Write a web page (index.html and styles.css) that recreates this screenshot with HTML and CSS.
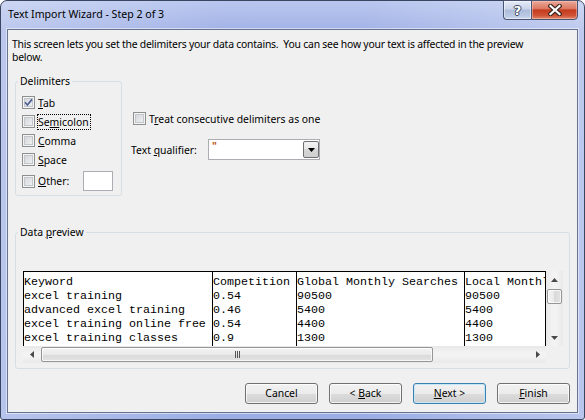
FILE: index.html
```html
<!DOCTYPE html>
<html>
<head>
<meta charset="utf-8">
<title>Text Import Wizard</title>
<link rel="stylesheet" href="styles.css">
</head>
<body>
<div class="window">
  <div class="titlebar">
    <span class="title">Text Import Wizard - Step 2 of 3</span>
    <div class="caption">
      <div class="cbtn help"><span class="qmark">?</span></div>
      <div class="cbtn close">
        <svg width="14" height="12" viewBox="0 0 14 12"><path d="M2.5 2 L11.5 10 M11.5 2 L2.5 10" stroke="#3b2620" stroke-width="4.4" stroke-linecap="square" fill="none"/><path d="M2.5 2 L11.5 10 M11.5 2 L2.5 10" stroke="#fff" stroke-width="2.2" stroke-linecap="square" fill="none"/></svg>
      </div>
    </div>
  </div>
  <div class="client">
    <p class="desc">This screen lets you set the delimiters your data contains.&nbsp; You can see how your text is affected in the preview<br>below.</p>
    <div class="top-row">
      <fieldset class="group delims">
        <legend>Delimiters</legend>
        <div class="checks">
          <div class="chk"><span class="box"><svg width="9" height="9" viewBox="0 0 9 9"><path d="M1 4.3 L3.4 7 L8 1.4" fill="none" stroke="#4d5f95" stroke-width="1.7"/></svg></span><span class="txt"><u>T</u>ab</span></div>
          <div class="chk"><span class="box"></span><span class="txt focus">Se<u>m</u>icolon</span></div>
          <div class="chk"><span class="box"></span><span class="txt"><u>C</u>omma</span></div>
          <div class="chk"><span class="box"></span><span class="txt"><u>S</u>pace</span></div>
          <div class="chk other"><span class="box"></span><span class="txt other-lbl"><u>O</u>ther:</span><span class="textbox"></span></div>
        </div>
      </fieldset>
      <div class="options">
        <div class="chk treat"><span class="box"></span><span class="txt">T<u>r</u>eat consecutive delimiters as one</span></div>
        <div class="qualifier">
          <span class="qlabel">Text <u>q</u>ualifier:</span>
          <div class="combo">
            <span class="combo-val">"</span>
            <span class="combo-btn"><svg width="7" height="4" viewBox="0 0 7 4"><path d="M0 0H7L3.5 4Z" fill="#000"/></svg></span>
          </div>
        </div>
      </div>
    </div>
    <fieldset class="group preview">
      <legend>Data <u>p</u>review</legend>
      <div class="pv">
        <div class="pv-table">
          <div class="col c1">Keyword
excel training
advanced excel training
excel training online free
excel training classes</div>
          <div class="col c2">Competition
0.54
0.46
0.54
0.9</div>
          <div class="col c3">Global Monthly Searches
90500
5400
4400
1300</div>
          <div class="col c4">Local Monthly Searches
90500
5400
4400
1300</div>
        </div>
        <div class="vscroll">
          <span class="sbtn up"><svg width="7" height="4" viewBox="0 0 7 4"><path d="M0 4H7L3.5 0Z" fill="#4a4a4a"/></svg></span>
          <span class="vthumb"></span>
          <span class="sbtn down"><svg width="7" height="4" viewBox="0 0 7 4"><path d="M0 0H7L3.5 4Z" fill="#4a4a4a"/></svg></span>
        </div>
        <div class="hscroll">
          <span class="sbtn left"><svg width="4" height="7" viewBox="0 0 4 7"><path d="M4 0V7L0 3.5Z" fill="#4a4a4a"/></svg></span>
          <span class="hthumb"><span class="grip"></span></span>
          <span class="sbtn right"><svg width="4" height="7" viewBox="0 0 4 7"><path d="M0 0V7L4 3.5Z" fill="#4a4a4a"/></svg></span>
        </div>
        <div class="corner"></div>
      </div>
    </fieldset>
    <div class="buttons">
      <button class="btn">Cancel</button>
      <button class="btn">&lt; <u>B</u>ack</button>
      <button class="btn default"><u>N</u>ext &gt;</button>
      <button class="btn"><u>F</u>inish</button>
    </div>
  </div>
</div>
</body>
</html>
```

FILE: styles.css
```css
* { box-sizing: border-box; margin: 0; padding: 0; }
html, body { width: 585px; height: 420px; background: #fff; overflow: hidden; }
body { font-family: "Noto Sans", "Open Sans", sans-serif; font-size: 10.4px; color: #000; }
u { text-decoration: underline; text-underline-offset: 1px; }

.window {
  width: 585px; height: 420px;
  border: 1px solid #3a4562;
  border-radius: 7px 7px 3px 3px;
  padding: 0 6px 6px 6px;
  display: flex; flex-direction: column;
  background:
    linear-gradient(to right, rgba(255,255,255,.28) 0, rgba(255,255,255,0) 38%, rgba(255,255,255,0) 62%, rgba(255,255,255,.3) 100%),
    linear-gradient(#b9c7ef, #a2b2e6 30px, #9badE4);
}
.titlebar { height: 28px; flex: none; display: flex; align-items: flex-start; }
.title { padding-left: 1px; line-height: 27px; font-size: 10.6px; color: #000; white-space: nowrap; }
.caption { margin-left: auto; margin-top: -1px; display: flex; }
.cbtn { height: 20px; border: 1px solid #4a5470; display: flex; align-items: center; justify-content: center; }
.help {
  width: 28px; border-right: none; border-radius: 0 0 0 4px;
  background: linear-gradient(#e6ebf6, #c9d3ea 45%, #aebcdb 50%, #bccae5 85%, #d3dcef);
  box-shadow: inset 0 0 0 1px rgba(255,255,255,.45);
}
.qmark { font-family: "DejaVu Sans", sans-serif; font-weight: bold; font-size: 13px; line-height: 13px; color: #fff;
  text-shadow: -1px 0 #3d465e, 1px 0 #3d465e, 0 -1px #3d465e, 0 1px #3d465e; }
.close {
  width: 47px; border-radius: 0 0 4px 0;
  background: linear-gradient(#eaa898, #dc7962 42%, #c43c1f 50%, #cf5235 80%, #e28a6d);
  box-shadow: inset 0 0 0 1px rgba(255,210,200,.45);
}

.client {
  flex: 1;
  border: 1px solid #66738f;
  box-shadow: 0 0 0 1px rgba(255,255,255,.5);
  background: #f0f0f0;
  display: flex; flex-direction: column;
}
.desc { flex: none; padding: 8px 0 0 4px; line-height: 13px; white-space: nowrap; letter-spacing: -0.22px; }

.top-row { flex: none; display: flex; margin-top: 11px; }
.group { border: 1px solid #d5dfe5; border-radius: 3px; padding: 0; }
.group legend { margin-left: 2px; padding: 0 2px; line-height: 13px; }
.delims { margin-left: 7px; width: 107px; height: 121px; }
.checks { padding: 5px 0 0 6px; }

.chk { display: flex; align-items: center; height: 19px; }
.box {
  width: 13px; height: 13px; flex: none; margin-right: 2px;
  border: 1px solid #8e8f8f;
  background: linear-gradient(135deg, #cdd0d5, #f6f6f6);
  box-shadow: inset 0 0 0 1px #f4f4f4, inset 0 0 0 2px #c3c6cb;
  display: flex; align-items: center; justify-content: center;
}
.txt { border: 1px solid transparent; padding-right: 1px; line-height: 14px; white-space: nowrap; }
.txt.focus { border: 1px dotted #000; }
.chk.other { height: 24px; }
.other-lbl { width: 46px; }
.textbox { width: 30px; height: 20px; border: 1px solid #abadb3; background: #fff; }

.options { margin-left: 9px; padding-top: 34px; }
.treat { padding-left: 2px; }
.qualifier { display: flex; align-items: center; margin-top: 11px; height: 21px; }
.qlabel { width: 77px; white-space: nowrap; }
.combo { width: 112px; height: 21px; border: 1px solid #abadb3; background: #fff; display: flex; }
.combo-val { padding: 0 0 0 3px; line-height: 12px; color: #b5561c; font-weight: bold; font-size: 10px; }
.combo-btn {
  margin: 1px 0 1px auto; width: 16px;
  border: 1px solid #6f6f6f; border-radius: 2px;
  background: linear-gradient(#f3f3f3, #e6e6e6 50%, #d6d6d6 50%, #cfcfcf);
  display: flex; align-items: center; justify-content: center;
}

.preview { margin: 30px 0 0 7px; width: 555px; height: 143px; flex: none; }
.pv {
  margin: 32px 0 0 7px;
  display: grid; grid-template-columns: 523px 17px; grid-template-rows: 75px 17px;
  width: 540px;
}
.pv-table {
  background: #fff; border-top: 1px solid #000; border-right: 1px solid #000;
  display: flex; overflow: hidden;
  font-family: "Liberation Mono", "Courier New", monospace; font-size: 11.667px; line-height: 14px; color: #000;
}
.col { flex: none; border-left: 1px solid #000; padding-top: 3px; white-space: pre; overflow: hidden; height: 100%; }
.c1 { width: 189px; }
.c2 { width: 84px; }
.c3 { width: 168px; }
.c4 { width: 81px; }

.vscroll {
  display: flex; flex-direction: column;
  background: linear-gradient(to right, #e8e8e8, #f3f3f3 40%, #f3f3f3 60%, #e8e8e8);
}
.sbtn { display: flex; align-items: center; justify-content: center; flex: none; }
.sbtn.up { height: 18px; }
.sbtn.down { height: 17px; margin-top: auto; }
.vthumb {
  height: 15px; margin: 0 1px; border: 1px solid #959595; border-radius: 2px;
  background: linear-gradient(to right, #f4f4f4, #e9e9e9 50%, #d9d9d9 50%, #e3e3e3);
  box-shadow: inset 0 0 0 1px rgba(255,255,255,.7);
}
.hscroll {
  display: flex;
  background: linear-gradient(#e8e8e8, #f3f3f3 40%, #f3f3f3 60%, #e8e8e8);
}
.sbtn.left { width: 18px; }
.sbtn.right { width: 17px; margin-left: auto; }
.hthumb {
  width: 392px; margin: 1px 0; border: 1px solid #959595; border-radius: 2px;
  background: linear-gradient(#f4f4f4, #e9e9e9 50%, #d9d9d9 50%, #e3e3e3);
  box-shadow: inset 0 0 0 1px rgba(255,255,255,.7);
  display: flex; align-items: center; justify-content: center;
}
.grip { width: 5px; height: 7px; background: repeating-linear-gradient(to right, #555 0 1px, transparent 1px 2px); }
.corner { background: #f0f0f0; }

.buttons { flex: none; display: flex; justify-content: flex-end; gap: 11px; margin-top: 14px; padding-right: 7px; }
.btn {
  width: 73px; height: 21px;
  font-family: inherit; font-size: 10.4px; color: #000;
  border: 1px solid #707070; border-radius: 3px;
  background: linear-gradient(#f2f2f2, #ebebeb 50%, #dddddd 50%, #cfcfcf);
  box-shadow: inset 0 0 0 1px rgba(255,255,255,.75);
  line-height: 17px;
}
.btn.default { border-color: #3c7fb1; box-shadow: inset 0 0 0 1px #c6e7f8; }
```
